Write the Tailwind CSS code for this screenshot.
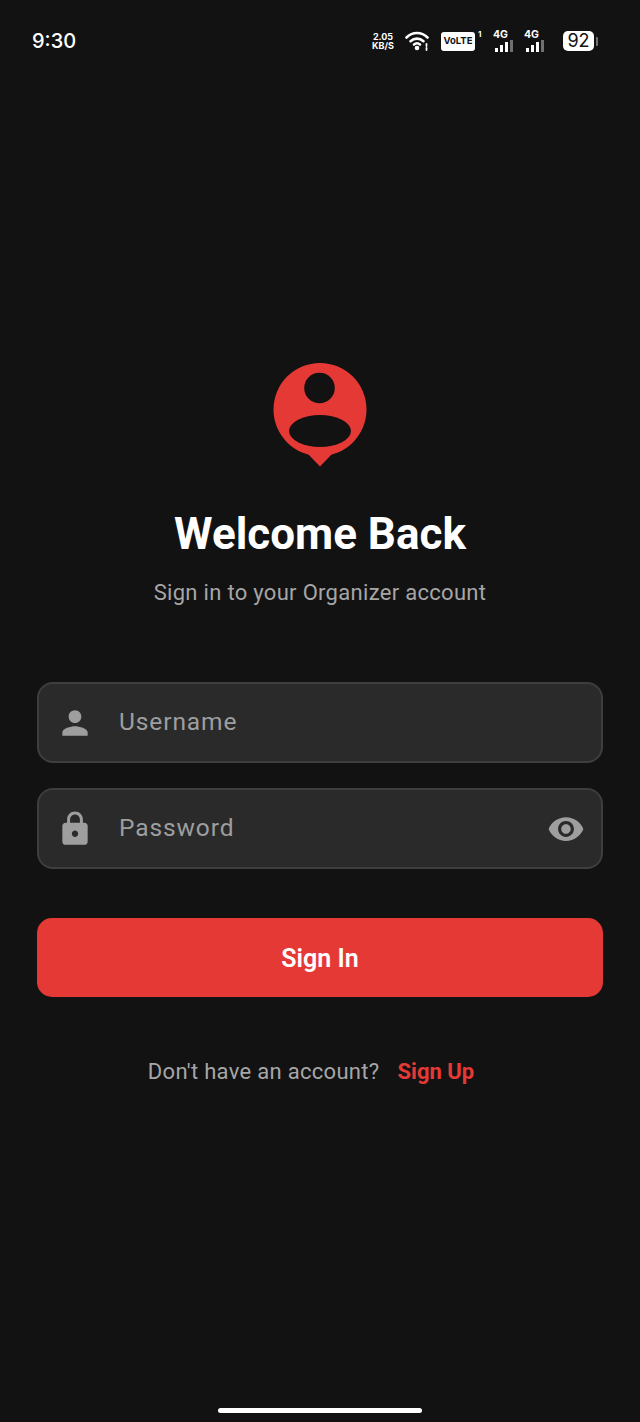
<!DOCTYPE html>
<html>
<head>
<meta charset="utf-8">
<script src="https://cdn.jsdelivr.net/npm/@tailwindcss/browser@4"></script>
</head>
<body class="bg-[#121212]">
<div class="w-[640px] h-[1422px] bg-[#121212] flex flex-col font-['Roboto',sans-serif] overflow-hidden relative">
  <!-- status bar -->
  <div class="h-[82px] shrink-0 flex items-center pl-[32px] text-white">
    <span class="text-[20px] leading-none font-['Inter',sans-serif] font-medium">9:30</span>
    <div class="ml-auto flex items-center mr-[42px]">
      <div class="w-[24px] flex flex-col items-center font-['Inter',sans-serif] font-bold text-[9px] leading-[9px]"><span>2.05</span><span>KB/S</span></div>
      <svg class="ml-[10px]" width="26" height="20" viewBox="0 0 26 20" fill="none" stroke="#fff" stroke-width="2.6" stroke-linecap="round">
        <path d="M1.500 6.500C7.500 0.500 16.500 0.500 22.500 6.500"/><path d="M5.500 10.200C9.300 6.800 14.700 6.800 18.500 10.200"/><path d="M9 13.500C10.800 12 13.200 12 15 13.500"/>
        <circle cx="12" cy="17" r="2.300" fill="#fff" stroke="none"/>
        <path d="M21.500 13v2M21.500 17v2" stroke-width="1.800"/>
      </svg>
      <div class="ml-[10px] w-[34px] h-[19px] bg-white rounded-[3px] text-[#121212] font-['Inter',sans-serif] font-bold text-[9.5px] flex items-center justify-center">VoLTE</div>
      <span class="self-start mt-[-1px] ml-[3px] font-['Inter',sans-serif] font-bold text-[8px] leading-[10px] w-[10px]">1</span>
      <div class="ml-[5px] flex flex-col items-start w-[20px]">
        <span class="font-['Inter',sans-serif] font-bold text-[10.5px] leading-[10px]">4G</span>
        <div class="flex items-end gap-[2px] h-[12px] ml-[2px]"><i class="block w-[3px] h-[4px] bg-white"></i><i class="block w-[3px] h-[7px] bg-white"></i><i class="block w-[3px] h-[10px] bg-white"></i><i class="block w-[3px] h-[12px] bg-white/40"></i></div>
      </div>
      <div class="ml-[11px] flex flex-col items-start w-[20px]">
        <span class="font-['Inter',sans-serif] font-bold text-[10.5px] leading-[10px]">4G</span>
        <div class="flex items-end gap-[2px] h-[12px] ml-[2px]"><i class="block w-[3px] h-[4px] bg-white"></i><i class="block w-[3px] h-[7px] bg-white"></i><i class="block w-[3px] h-[10px] bg-white"></i><i class="block w-[3px] h-[12px] bg-white/40"></i></div>
      </div>
      <div class="ml-[19px] flex items-center">
        <div class="w-[31px] h-[20px] bg-white rounded-[5px] text-[#121212] text-[18px] leading-none font-['Inter',sans-serif] font-normal flex items-center justify-center">92</div>
        <i class="block w-[2px] h-[9px] ml-[2px] bg-white/40 rounded-r-[1px]"></i>
      </div>
    </div>
  </div>

  <!-- logo -->
  <div class="mt-[281px] flex flex-col items-center">
    <svg width="96" height="104" viewBox="0 0 96 104">
      <circle cx="48" cy="46.500" r="46.500" fill="#e53935"/>
      <path d="M36 91L48 103.500L60 91Z" fill="#e53935"/>
      <circle cx="47.500" cy="25" r="15.300" fill="#121212"/>
      <ellipse cx="48" cy="68" rx="31" ry="16" fill="#121212"/>
    </svg>
    <h1 class="mt-[41px] text-[44px] leading-[52px] font-bold text-white">Welcome Back</h1>
    <p class="mt-[19px] text-[22px] leading-[28px] text-[#a6a6a6] tracking-[0.3px]">Sign in to your Organizer account</p>
  </div>

  <!-- form -->
  <div class="mt-[75px] mx-[37px] flex flex-col">
    <div class="h-[81px] rounded-[16px] border-2 border-[#3e3e3e] bg-[#2a2a2a] flex items-center pl-[17px] pr-[16px]">
      <svg width="38" height="38" viewBox="0 0 24 24" fill="#9e9e9e"><path d="M12 12c2.210 0 4-1.790 4-4s-1.790-4-4-4-4 1.790-4 4 1.790 4 4 4zm0 2c-2.670 0-8 1.340-8 4v2h16v-2c0-2.660-5.330-4-8-4z"/></svg>
      <span class="ml-[25px] text-[24.5px] leading-none text-[#9e9e9e] tracking-[0.9px]">Username</span>
    </div>
    <div class="mt-[25px] h-[81px] rounded-[16px] border-2 border-[#3e3e3e] bg-[#2a2a2a] flex items-center pl-[17px] pr-[16px]">
      <svg width="38" height="38" viewBox="0 0 24 24" fill="#9e9e9e"><path d="M18 8h-1V6c0-2.760-2.240-5-5-5S7 3.240 7 6v2H6c-1.100 0-2 .9-2 2v10c0 1.100.9 2 2 2h12c1.100 0 2-.9 2-2V10c0-1.100-.9-2-2-2zm-6 9c-1.100 0-2-.9-2-2s.9-2 2-2 2 .9 2 2-.9 2-2 2zm3.100-9H8.900V6c0-1.710 1.390-3.100 3.100-3.100 1.710 0 3.100 1.390 3.100 3.100v2z"/></svg>
      <span class="ml-[25px] text-[24.5px] leading-none text-[#9e9e9e] tracking-[0.9px]">Password</span>
      <svg class="ml-auto" width="38" height="38" viewBox="0 0 24 24" fill="#9e9e9e"><path d="M12 4.500C7 4.500 2.730 7.610 1 12c1.730 4.390 6 7.500 11 7.500s9.270-3.110 11-7.500c-1.730-4.390-6-7.500-11-7.500zM12 17c-2.760 0-5-2.240-5-5s2.240-5 5-5 5 2.240 5 5-2.240 5-5 5zm0-8c-1.660 0-3 1.340-3 3s1.340 3 3 3 3-1.340 3-3-1.340-3-3-3z"/></svg>
    </div>
    <button class="mt-[49px] h-[79px] rounded-[15px] bg-[#e53935] text-white text-[25px] font-semibold flex items-center justify-center pt-[2px]">Sign In</button>
    <div class="mt-[61px] pr-[18px] flex items-center justify-center text-[22px] leading-[28px]">
      <span class="text-[#a6a6a6] tracking-[0.3px]">Don't have an account?</span>
      <span class="ml-[18px] text-[#e53935] font-bold">Sign Up</span>
    </div>
  </div>

  <!-- home indicator -->
  <div class="absolute left-[218px] top-[1408px] w-[204px] h-[5px] rounded-full bg-white"></div>
</div>
</body>
</html>
